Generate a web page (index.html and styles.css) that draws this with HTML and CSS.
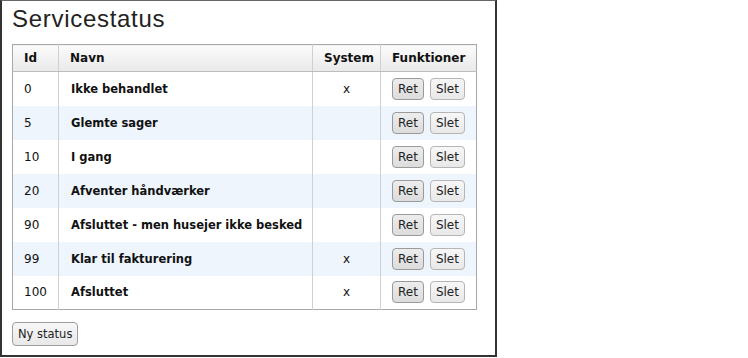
FILE: index.html
```html
<!DOCTYPE html>
<html lang="da">
<head>
  <meta charset="UTF-8" />
  <title>Servicestatus</title>
  <link rel="stylesheet" href="styles.css">
</head>
<body>
  <div class="panel">
    <h1 class="title">Servicestatus</h1>

    <table class="status-table">
      <colgroup>
        <col class="col-id">
        <col class="col-name">
        <col class="col-system">
        <col class="col-actions">
      </colgroup>
      <thead>
        <tr>
          <th>Id</th>
          <th>Navn</th>
          <th class="center">System</th>
          <th class="center">Funktioner</th>
        </tr>
      </thead>
      <tbody>
        <tr>
          <td>0</td>
          <td class="name">Ikke behandlet</td>
          <td class="center">x</td>
          <td><div class="actions"><button class="btn btn-dark">Ret</button><button class="btn">Slet</button></div></td>
        </tr>
        <tr>
          <td>5</td>
          <td class="name">Glemte sager</td>
          <td class="center"></td>
          <td><div class="actions"><button class="btn btn-dark">Ret</button><button class="btn">Slet</button></div></td>
        </tr>
        <tr>
          <td>10</td>
          <td class="name">I gang</td>
          <td class="center"></td>
          <td><div class="actions"><button class="btn btn-dark">Ret</button><button class="btn">Slet</button></div></td>
        </tr>
        <tr>
          <td>20</td>
          <td class="name">Afventer håndværker</td>
          <td class="center"></td>
          <td><div class="actions"><button class="btn btn-dark">Ret</button><button class="btn">Slet</button></div></td>
        </tr>
        <tr>
          <td>90</td>
          <td class="name">Afsluttet - men husejer ikke besked</td>
          <td class="center"></td>
          <td><div class="actions"><button class="btn btn-dark">Ret</button><button class="btn">Slet</button></div></td>
        </tr>
        <tr>
          <td>99</td>
          <td class="name">Klar til fakturering</td>
          <td class="center">x</td>
          <td><div class="actions"><button class="btn btn-dark">Ret</button><button class="btn">Slet</button></div></td>
        </tr>
        <tr>
          <td>100</td>
          <td class="name">Afsluttet</td>
          <td class="center">x</td>
          <td><div class="actions"><button class="btn btn-dark">Ret</button><button class="btn">Slet</button></div></td>
        </tr>
      </tbody>
    </table>

    <button class="btn btn-new">Ny status</button>
  </div>
</body>
</html>
```

FILE: styles.css
```css
* {
  margin: 0;
  padding: 0;
  box-sizing: border-box;
}

body {
  background: #fff;
  font-family: 'DejaVu Sans', Verdana, sans-serif;
  font-size: 12px;
  color: #111;
}

.panel {
  width: 497px;
  height: 357px;
  border: 2px solid #333;
  border-top: 1px solid #666;
  padding: 4px 10px 0 10px;
}

.title {
  font-family: 'Liberation Sans', Arial, sans-serif;
  font-weight: normal;
  font-size: 24px;
  letter-spacing: 0.7px;
  line-height: 28px;
  color: #222;
  margin-bottom: 11px;
}

.status-table {
  width: 465px;
  table-layout: fixed;
  border-collapse: collapse;
  border: 1px solid #a8a8a8;
}

.col-id { width: 46px; }
.col-name { width: 254px; }
.col-system { width: 68px; }
.col-actions { width: 96px; }

.status-table th {
  height: 27px;
  text-align: left;
  font-weight: bold;
  padding: 0 11px;
  background: linear-gradient(#fbfbfb, #e9e9e9);
  border-bottom: 1px solid #bdbdbd;
  border-left: 1px solid #d0d0d0;
}

.status-table td {
  height: 34px;
  padding: 0 11px;
  border-left: 1px solid #d0d0d0;
}

.status-table td.name {
  font-weight: bold;
  font-size: 11.5px;
  white-space: nowrap;
  padding-left: 12px;
  padding-right: 0;
}

.status-table th:first-child,
.status-table td:first-child {
  border-left: none;
}

.status-table tbody tr:nth-child(even) td {
  background: #eef5fd;
}

.status-table .center {
  text-align: center;
}

.actions {
  display: flex;
  justify-content: center;
  gap: 6px;
}

.btn {
  height: 22px;
  padding: 0 5px;
  font-family: 'DejaVu Sans', Verdana, sans-serif;
  font-size: 12px;
  color: #222;
  border: 1px solid #b5b5b5;
  border-radius: 4px;
  background: linear-gradient(#f7f7f7, #e8e8e8);
  cursor: pointer;
}

.btn-dark {
  border-color: #9a9a9a;
  background: linear-gradient(#ededed, #dcdcdc);
}

.btn-new {
  margin-top: 12px;
  height: 24px;
  padding: 0 5px;
  font-size: 11.5px;
  border-color: #9f9f9f;
}
```
